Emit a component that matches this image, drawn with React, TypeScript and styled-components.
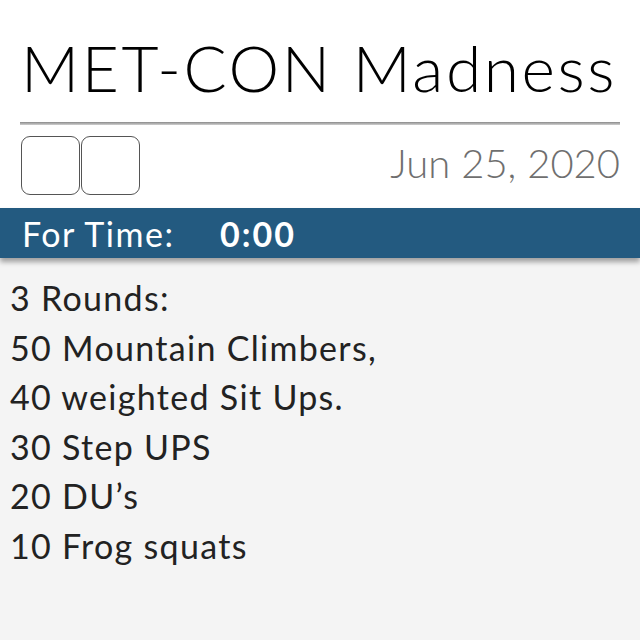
import React from 'react'
import styled, { createGlobalStyle } from 'styled-components'

const GlobalStyle = createGlobalStyle`
  html, body {
    margin: 0;
    padding: 0;
    background: #f4f4f4;
  }
  body {
    font-family: Lato, 'Noto Sans', sans-serif;
  }
`

const workout = [
  '3 Rounds:',
  '50 Mountain Climbers,',
  '40 weighted Sit Ups.',
  '30 Step UPS',
  '20 DU’s',
  '10 Frog squats',
]

export default function App() {
  return (
    <Page>
      <GlobalStyle />
      <Header>
        <Title>MET-CON Madness</Title>
        <Divider />
        <MetaRow>
          <Boxes>
            <Box />
            <Box />
          </Boxes>
          <DateText>Jun 25, 2020</DateText>
        </MetaRow>
      </Header>
      <TimeBar>
        <TimeLabel>For Time:</TimeLabel>
        <TimeValue>0:00</TimeValue>
      </TimeBar>
      <Body>
        {workout.map((line) => (
          <Line key={line}>{line}</Line>
        ))}
      </Body>
    </Page>
  )
}

const Page = styled.div`
  width: 640px;
  height: 640px;
  overflow: hidden;
  display: flex;
  flex-direction: column;
  background: #f4f4f4;
`

const Header = styled.div`
  background: #ffffff;
  padding: 30px 20px 13px 20px;
  display: flex;
  flex-direction: column;
`

const Title = styled.h1`
  margin: 0 0 0 1px;
  font-family: Lato, sans-serif;
  font-weight: 300;
  font-size: 64px;
  letter-spacing: 2.6px;
  line-height: 76px;
  color: #000;
  white-space: nowrap;
`

const Divider = styled.div`
  height: 3px;
  margin-top: 16px;
  background: linear-gradient(to bottom, #8a8a8a, #d0d0d0);
`

const MetaRow = styled.div`
  margin-top: 11px;
  display: flex;
  align-items: center;
  justify-content: space-between;
`

const Boxes = styled.div`
  display: flex;
  gap: 1px;
  padding-left: 1px;
`

const Box = styled.div`
  width: 57px;
  height: 57px;
  border: 1px solid #555;
  border-radius: 9px;
  background: #fff;
`

const DateText = styled.div`
  font-family: Lato, sans-serif;
  font-weight: 300;
  font-size: 40px;
  color: #6f6f6f;
  margin-top: -6px;
`

const TimeBar = styled.div`
  height: 50px;
  background: #235a80;
  display: flex;
  align-items: center;
  padding-left: 22px;
  box-shadow: 0 4px 5px rgba(0, 0, 0, 0.35);
  position: relative;
  z-index: 1;
  color: #fff;
  font-size: 34px;
`

const TimeLabel = styled.span`
  font-weight: 400;
  letter-spacing: 1.5px;
  width: 198px;
`

const TimeValue = styled.span`
  font-weight: 700;
  letter-spacing: 2px;
`

const Body = styled.div`
  padding: 15px 10px;
  display: flex;
  flex-direction: column;
`

const Line = styled.div`
  font-family: Lato, sans-serif;
  font-size: 34px;
  letter-spacing: 1.3px;
  line-height: 49.5px;
  color: #222;
`
